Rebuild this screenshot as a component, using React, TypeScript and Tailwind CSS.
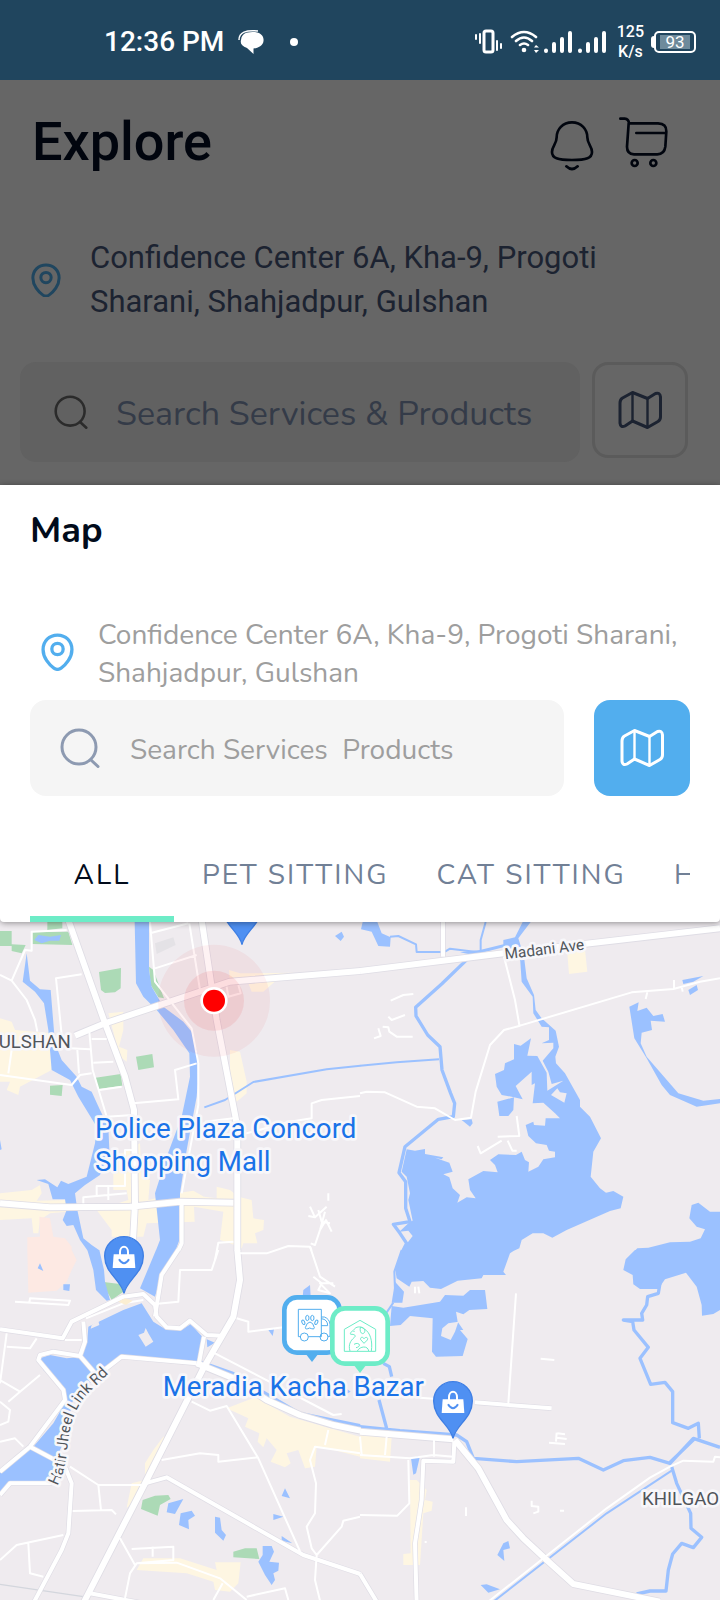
import React from "react";

/* Map drawing: four tiles, each 1080 units wide and 1020 units high. */
const tileTransforms = [
  "translate(0 0)",
  "translate(1080 0)",
  "translate(0 1020)",
  "translate(1080 1020)",
];

type TilePaths = [string, string, string, string];

const parks: TilePaths = [
  "M0 63H35V108H0ZM35 103L77 105L65 130L35 123ZM97 67L205 65L217 105L97 102ZM142 36H187V55L142 60ZM297 186L363 174L362 235L345 247L315 249L303 240ZM447 170L460 180L492 265L475 262L452 225ZM408 440L457 432L462 472L415 480ZM287 503L362 492L367 527L295 537ZM150 527L188 525L185 558L150 554Z",
  "",
  "M305 95L365 103L370 125L335 150ZM428 750L465 737L505 735L512 747L480 765L473 797L423 777ZM700 905L735 895L770 895L778 927L700 922Z",
  "",
];

const districts: TilePaths = [
  "M0 325L35 335L45 360L155 370V480L60 530L55 555L20 540L30 515H0ZM325 310L370 305V360L357 410L382 420L380 455L360 440ZM687 180L720 190L880 188L830 210L790 245H755L745 220L690 225ZM690 420L720 425L740 515V550L710 575L690 500ZM0 850L95 840L120 825L125 850L110 872L200 870V905L150 910L120 930L115 970H100L95 925L0 930ZM340 745L420 700L425 800L450 810L445 870L530 850L580 842L612 860L650 865V830L690 840L715 860L755 870L760 925L792 930L790 960L765 970L772 1000H730L725 1015L690 1000L660 990L670 905L582 890L584 935L440 940L430 980H335V960L290 900L385 870L380 840L340 840Z",
  "M622 130L675 120L682 185L627 192Z",
  "M680 475L770 440L790 455L870 500L990 535L1080 560V620L1000 600L950 590L945 650L915 655L895 600L860 610L872 640L855 652L812 635L830 600L800 565L790 592L773 575L778 550L735 530L745 505ZM490 560H515L400 760L380 773L395 700L435 690V640L460 600ZM430 925H540L650 960L645 937H722L715 1000L690 1025L645 1020L640 995L560 970L410 960Z",
  "M0 550L95 560L90 635L0 625ZM150 690H170L200 720L195 750L218 755L215 782L190 790L180 945H130V912L152 910Z",
];

const hospital: TilePaths = [
  "M82 982L120 980L118 920L150 925L160 980L195 985L215 1010V1020H82Z",
  "",
  "M82 0H215L230 30L215 60L200 95L170 122L85 128Z",
  "",
];

const water: TilePaths = [
  "M80 130L68 215L105 245L132 280L145 360L155 480L210 510L235 560L290 650L285 700L260 800L205 822L183 812L172 832L135 808L110 810L145 822L158 868H195L200 900L188 930L200 948L220 945L240 990L262 1021H298L275 1005L250 985L232 900L225 850L255 825L300 795L328 720L325 650L300 600L275 545L245 530L230 500L185 450L165 400L152 240L120 238L90 212ZM404 36H447V180L455 230L490 290L550 335L575 365L592 430L593 520L590 560L560 720L540 850V985L527 1021H468L480 990L465 850L500 740L545 620L570 500L568 430L520 360L470 300L430 260L408 220ZM103 90L115 75L150 80L183 75L178 92L150 92L125 100ZM1005 78L1025 65L1032 80L1022 93ZM0 690L5 718L0 720Z",
  "M8 36H52L65 70L92 82L90 110L55 108L35 65L3 58ZM300 127L360 120L430 103L430 90L465 82L488 36H512L475 85L492 140L500 205L522 255L527 300L545 325L587 362L597 410L586 440L588 460L615 490L660 570V590L690 620L723 685L700 725L692 800L720 835L738 848L760 843L790 860L782 895L750 903L620 960L577 983L550 970L518 970L485 990L478 1015L465 1021H125L158 978L145 962L118 965L150 935L158 932L145 870L150 850L140 800L125 785L140 718L165 722L195 717V732L250 742L245 748L225 743L268 758L278 785L250 793L268 802L278 835L300 855L292 878L320 862L347 865L330 840L325 808L370 783L413 787L405 765L390 750L415 733L468 735L485 725L495 750L507 757L505 785L535 770L550 748L585 742V725L567 722L560 705L528 700L505 678L497 645L520 635L522 645L555 647L557 625H600L585 610L550 578L518 580L525 520L515 525V485L467 528L488 568L455 560L425 555L410 530L405 492L432 480L435 460L462 448V402L482 407L513 385L502 437L532 438L560 488L562 542L610 512L575 522L565 485L548 452L580 415V398L545 400L567 390V352L545 350L520 310L518 260L485 215L480 140L430 112L340 135ZM412 575L462 562L460 600L445 618H418ZM305 630L335 628L338 640L330 650ZM808 290L836 277L832 303L860 293L880 318L908 312L915 335L872 332L876 360L845 368L842 400L860 440L955 550L1030 572L1080 567V580L1010 590L930 555L905 525L860 445L823 385ZM967 210L1030 198L1000 215L970 222ZM985 240L1010 225L1014 240L990 255ZM995 885L1015 878L1050 905H1080V1021H826L832 1015L865 1013L930 997L990 995L1022 985L1035 958L1010 950L988 925Z",
  "M262 0H298L312 60L315 95L330 150L320 152L288 120L280 60ZM468 0H530L485 70L465 140L420 115ZM265 230L370 180L425 160L460 215L500 240H545L572 222L608 262V300L590 335L370 318L300 360L270 400L235 425L215 460L200 560L180 600L160 690L60 700L20 710L0 735V670L100 590L160 520L200 450L195 420L130 360L120 325L150 315L200 325L245 320L262 270ZM620 268L645 278L622 292ZM805 240L822 238L818 258ZM910 120L930 105L932 140H908ZM600 330L700 365L780 415L900 485L1081 522V540L900 505L780 440L660 375ZM505 760L550 747L525 792L500 787ZM542 790L575 782L585 797L565 810L567 838L537 825ZM645 800L660 803L665 840L678 855L670 872L645 848ZM855 715L870 745L845 738ZM820 792L850 800L820 810ZM845 858L877 880L845 872ZM788 888H815L822 905L808 935L837 938L835 962L820 970L825 990L815 1005L795 975L775 935L788 915ZM120 40L130 63L113 55ZM190 103H210L208 123L190 120ZM1038 415L1052 425L1038 432Z",
  "M125 0H465L450 10L430 65L438 75H370L365 85L293 92L243 117L210 113L190 93L155 95L148 110L110 85L105 55ZM105 95L132 125L127 158H95ZM95 168L130 173L240 155L255 135L310 137L330 120H375L382 177L328 180L310 193L288 185L293 215L310 240H300L323 267L308 318L228 320L216 305L218 205L150 198L122 225L90 228ZM825 0H1080V180L1060 192L1026 197L1025 165L1010 110L978 68L915 88L895 117H840L820 103L818 75L790 60L797 28ZM430 880L445 873L450 895L430 900L433 933L412 915ZM153 625L180 618L168 670L160 674ZM362 1005L380 1003L420 1018L385 1028Z",
];

const islands: TilePaths = [
  "",
  "M573 555L592 535L600 547L620 550L613 578Z",
  "M415 255L432 248L437 234L445 250L460 275L437 290ZM275 225L295 212L298 225L272 236Z",
  "M265 220L295 215L285 245L272 270L243 258L247 235Z",
];

const streams: TilePaths = [
  "M613 592L675 570L760 516L980 478L1081 467",
  "M0 467L110 457L237 448M90 80L115 78L168 103L170 126H250M255 125L270 116L350 126M377 36L362 90V125",
  "",
  "M125 0L103 65L105 120M130 0L110 60M100 158L78 190M935 662L740 790L400 1055",
];

const canals: TilePaths = [
  "",
  "M330 140L245 222L167 292L168 318L203 375L240 410L246 480L272 550L284 580L280 620L235 628L135 710L117 788L137 815V895L150 935L100 943L120 970L140 1000L125 1030",
  "",
  "M70 340L88 350L95 380M57 450L80 535M900 100L895 130L863 140L860 165L845 190L848 210L790 210L818 215L822 240L865 292L840 325L872 403L915 397L938 425L938 518L985 535L1015 520L1018 565M935 650L950 700L992 790L993 835L1025 862L1000 893L965 880L938 912L925 960L918 1023H870L830 1032M0 530L120 542L290 555L320 575L340 625L470 635L655 625L730 660L790 632L870 622L930 640L1000 565L1080 592M925 642L1005 565",
];

const avenues: TilePaths = [
  "M205 30L315 340L375 500L402 600L405 880L395 1070M225 377L315 340L600 245L690 215L1081 183M605 30L650 330L712 650V1022M0 880L150 892L390 890L540 875L700 878",
  "M0 183L430 130L1080 55",
  "M712 0L720 90L700 200L610 355L435 700L250 1060M590 340L700 385L800 450L900 495L1000 525L1081 542",
  "M0 545L280 568M285 570L355 655L440 810L490 865L560 930L640 1002L900 1055",
];

const roads: TilePaths = [
  "M545 875V1000L535 1021",
  "M249 30V140",
  "M0 238L188 265L215 215L370 140L430 132L465 165L470 200L500 232L540 235L570 212L620 255L665 257M250 215L255 275L240 318L285 370M240 318L160 305L120 315L115 330L190 420L195 450L90 590L0 665M590 340L365 320L300 370M195 650L215 700L205 850L185 900L100 1060M90 590L165 630M0 735L30 700L150 700L170 690M612 260L595 350M535 -1L485 75L465 200M435 700L500 682L910 915L1081 972M270 1030L430 1060",
  "M283 575L280 635L190 632L185 750L165 880L170 1060M0 972L50 1055M345 457L575 475",
];

const lanes: TilePaths = [
  "M0 195L35 212L75 120L95 122V65L200 60M35 212L80 270L105 330L112 365M245 193L168 205L185 375M268 365L278 480L320 620M275 387H320M280 458L340 455M0 495L215 525L240 495L275 490M210 415L270 418M232 420L237 490M35 420L25 490M298 540L365 530M400 580L535 568L525 480L590 460M450 70L565 40M465 175L590 135M450 36L465 215L575 355L595 460V585L545 850M568 40L600 240M250 880V862L380 850M290 855V828H375V720H400M325 828V870M1080 558L965 570L935 580V625L870 635L740 670L715 675M712 1030L800 1030L865 1008L930 1010L935 1022M645 1050L655 998L700 995M320 620L400 615M615 635L700 625M930 890L945 922L925 918M945 922L980 890M955 900L965 935L990 940M975 905L960 960L945 1005L932 1000M960 960L978 930L995 965M985 850V872M680 230L685 260L722 250L715 225",
  "M432 140L465 270L478 345M0 550L20 545L75 547L170 590L225 595L285 630L333 623L347 545L390 405L432 360L480 347L815 247L940 237L1020 215L1080 205M92 272L130 255L160 252M85 320L95 330L135 315M55 355L62 378L42 385M68 350L85 352L88 365L110 380H158M470 618L478 678L413 680M353 708L362 730L425 692M443 692L457 722H470M942 210V235M857 267L862 247M965 230L968 245",
  "M465 162L535 155L540 60L635 60L655 0M710 205L745 215V245L850 232M575 455L630 482L680 468L775 625L905 915M485 630L600 610L655 615V635L775 622M210 650L295 705H430M295 705L303 780M218 783L335 780L348 793M360 865L405 945M395 897L520 890V930L410 940M458 890V920M375 1045L390 970L410 940L530 938L660 985L740 1050M740 1040L855 1015L865 1050M640 1050L668 1000M0 930L50 885L190 855M85 880L90 970L130 980M20 250L0 400M20 290L90 295L110 265M0 390L60 425L120 375M25 455L60 425M0 455L30 480L25 515L0 525M0 575L45 565L70 590M195 270H245M45 155L205 165L210 152L90 145L88 158M930 -10L960 80L1005 110M940 80L965 100L955 120L990 130L960 100L1000 100M258 205L370 160L430 150M645 310L1000 495L1025 492M985 540L975 585M1080 610L945 590L930 630L948 700L945 790L920 830L935 895L950 915L945 990L962 1060M950 915L1025 830L1030 812L1080 800",
  "M180 443L220 446M468 130L445 460M0 615L150 625L220 615L280 620M145 630L148 760L112 797L0 795M222 570V620M80 560L75 615M0 560L5 615M930 650L870 683L740 775L385 1055M930 650L970 632L1060 635L1065 620L1080 622M542 326L583 330M590 548L588 575M592 550L615 553M590 563L620 567M567 578L615 582M515 752V768L535 770V785L520 790M318 772V798M600 782H612M194 876H200M165 110V130M175 110L178 130",
];

function Fill({ paths, color }: { paths: TilePaths; color: string }) {
  return (
    <g fill={color}>
      {paths.map((d, i) => (d ? <path key={i} d={d} transform={tileTransforms[i]} /> : null))}
    </g>
  );
}

function Line({ paths, color, width }: { paths: TilePaths; color: string; width: number }) {
  return (
    <g fill="none" stroke={color} strokeWidth={width} strokeLinejoin="round">
      {paths.map((d, i) => (d ? <path key={i} d={d} transform={tileTransforms[i]} /> : null))}
    </g>
  );
}

function ShopPin({ x, y }: { x: number; y: number }) {
  return (
    <g transform={`translate(${x} ${y})`}>
      <path
        d="M0 112C-8 72-58 52-58 0A58 58 0 0 1 58 0C58 52 8 72 0 112Z"
        fill="#4f90f2"
        stroke="#3f7fe4"
        strokeWidth="4"
      />
      <path d="M-31-5H31L34 36H-34Z" fill="#fff" />
      <path d="M-12-3V-12A12 16 0 0 1 12-12V-3" fill="none" stroke="#fff" strokeWidth="6" />
      <path d="M-15 10Q0 34 15 10" fill="none" stroke="#4f90f2" strokeWidth="6" />
    </g>
  );
}

function CityMap() {
  return (
    <svg viewBox="0 36 2160 2034" className="block h-auto w-full" role="img" aria-label="Map of Gulshan">
      <rect y="36" width="2160" height="2034" fill="#efebef" />
      <Fill paths={districts} color="#fef6e2" />
      <Fill paths={hospital} color="#fde9e3" />
      <Fill paths={parks} color="#acdab6" />
      <path d="M465 100L520 82L527 105L470 132Z" fill="#e4e2e6" />
      <Fill paths={water} color="#9bc1ff" />
      <Fill paths={islands} color="#efebef" />
      <Line paths={streams} color="#9bc1ff" width={6} />
      <Line paths={canals} color="#9bc1ff" width={10} />
      <path d="M0 2023L250 2060" stroke="#d3d6dd" strokeWidth="4" />
      <Line paths={roads} color="#dfdde5" width={16} />
      <Line paths={avenues} color="#dfdde5" width={23} />
      <Line paths={lanes} color="#ffffff" width={6} />
      <Line paths={roads} color="#ffffff" width={12} />
      <Line paths={avenues} color="#ffffff" width={18} />
      <path d="M355 1175L375 1165L398 1172L378 1185Z" fill="#fbeed2" />

      <g fill="#e9272f">
        <circle cx="642" cy="272" r="168" fillOpacity=".06" />
        <circle cx="642" cy="272" r="90" fillOpacity=".1" />
      </g>
      <circle cx="642" cy="272" r="41" fill="#fff" />
      <circle cx="642" cy="272" r="33" fill="#f00" />

      <ShopPin x={726} y={-8} />
      <ShopPin x={372} y={1038} />
      <ShopPin x={1359} y={1473} />

      <g
        fontFamily="Roboto, sans-serif"
        stroke="#f8f7fa"
        strokeWidth="16"
        strokeLinejoin="round"
        style={{ paintOrder: "stroke" }}
      >
        <g fill="#1a73e8" fontSize="83">
          <text x="285" y="683">Police Plaza Concord</text>
          <text x="285" y="782">Shopping Mall</text>
          <text x="488" y="1459">Meradia Kacha Bazar</text>
        </g>
        <g fill="#50555b" fontSize="56">
          <text x="-4" y="415">ULSHAN</text>
          <text x="1926" y="1786">KHILGAO</text>
        </g>
        <g fill="#50555b" fontSize="46">
          <text x="1516" y="148" transform="rotate(-7 1516 148)">Madani Ave</text>
          <path
            id="link-road"
            d="M172 1728C215 1650 190 1570 235 1490C260 1445 290 1430 345 1370"
            fill="none"
            stroke="none"
          />
          <text>
            <textPath href="#link-road">Hatir Jheel Link Rd</textPath>
          </text>
        </g>
      </g>
    </svg>
  );
}

function VanMarker() {
  return (
    <svg viewBox="0 0 180 201" className="w-full" fill="none">
      <path d="M72 178H108L90 201Z" fill="#52aeee" />
      <rect x="7" y="7" width="166" height="166" rx="38" fill="#fff" stroke="#52aeee" strokeWidth="14" />
      <g stroke="#52aeee" strokeWidth="3">
        <path d="M55 125H49V43H118V125H79M118 66H127Q143 72 144 88V124H138M118 92H137Q137 73 118 71" />
        <circle cx="67" cy="126" r="12" />
        <circle cx="126" cy="126" r="12" />
        <ellipse cx="64" cy="82" rx="4" ry="7" transform="rotate(-25 64 82)" />
        <ellipse cx="76" cy="69" rx="5" ry="8" />
        <ellipse cx="91" cy="69" rx="5" ry="8" />
        <ellipse cx="103" cy="82" rx="4" ry="7" transform="rotate(25 103 82)" />
        <path d="M70 98Q74 82 84 81Q93 82 97 98Q97 105 83 99Q70 105 70 98Z" />
      </g>
    </svg>
  );
}

function KennelMarker() {
  return (
    <svg viewBox="0 0 180 201" className="w-full" fill="none">
      <path d="M72 178H108L90 201Z" fill="#6decc7" />
      <rect x="7" y="7" width="166" height="166" rx="38" fill="#fff" stroke="#6decc7" strokeWidth="14" />
      <g stroke="#6decc7" strokeWidth="3" strokeLinejoin="round">
        <path d="M43 136V70L90 43L137 70V136Z" />
        <path d="M60 135C54 116 62 104 72 95C82 88 70 84 62 85C58 78 70 76 74 68C82 60 96 62 102 68C122 80 128 106 124 135" />
        <path d="M91 64C88 78 96 88 103 80C108 72 100 64 91 64M72 115C88 106 96 122 78 125M82 135C90 120 114 118 116 135" />
        <path d="M102 112L92 101C90 92 99 92 102 98C106 92 116 93 112 102Z" />
        <path d="M70 76H74" />
      </g>
    </svg>
  );
}

function MapIcon({ className }: { className: string }) {
  return (
    <svg viewBox="0 0 44 40" className={className} fill="none" stroke="currentColor" strokeWidth="3" strokeLinejoin="round">
      <path d="M14.500 2.500L4.500 8Q2 9.500 2 13V33Q2.500 38 7 36L14.500 31L29.500 37.500L40 31.500Q42.500 30 42.500 27V7Q42 2 37.500 3.500L29.500 8.500Z" />
      <path d="M14.500 2.500V31M29.500 8.500V37.500" strokeWidth="2.400" />
    </svg>
  );
}

function PinIcon({ className }: { className: string }) {
  return (
    <svg viewBox="0 0 32 37" className={className} fill="none" stroke="currentColor" strokeWidth="3.200">
      <path d="M16 2C8 2 2 8 2 16C2 24 8 31 12.500 34Q16 36.500 19.500 34C24 31 30 24 30 16C30 8 24 2 16 2Z" />
      <circle cx="16" cy="15.500" r="5.500" />
    </svg>
  );
}

function SearchIcon({ className }: { className: string }) {
  return (
    <svg viewBox="0 0 40 40" className={className} fill="none" stroke="currentColor" strokeWidth="3" strokeLinecap="round">
      <circle cx="19" cy="19" r="17" />
      <path d="M31 32L38 38.500" />
    </svg>
  );
}

function BellIcon() {
  return (
    <svg viewBox="0 0 132 156" className="w-11" fill="none" stroke="currentColor" strokeWidth="8" strokeLinecap="round">
      <path d="M66 7C38 7 20 28 20 52C20 72 6 78 6 96C6 114 22 120 66 120C110 120 126 114 126 96C126 78 112 72 112 52C112 28 94 7 66 7Z" />
      <path d="M49 139Q66 155 83 139" />
    </svg>
  );
}

function CartIcon() {
  return (
    <svg viewBox="0 0 156 156" className="w-[52px]" fill="none" stroke="currentColor" strokeWidth="8" strokeLinecap="round">
      <path d="M7 8H20Q32 9 33 22H120Q146 23 145 46L142 92Q139 115 118 115H48Q27 114 27 92L32 22M55 51H142" />
      <circle cx="50" cy="141" r="9" />
      <circle cx="106" cy="141" r="9" />
    </svg>
  );
}

function StatusBar() {
  return (
    <div className="flex h-20 items-center bg-[#20455e] pt-1 pr-6 pl-[104px] font-[Roboto,sans-serif] text-white">
      <span className="text-[28px] leading-8 font-medium">12:36 PM</span>
      <svg viewBox="0 0 26 24" className="ml-3.5 w-[26px]" fill="currentColor">
        <path d="M3 10C4 2 10 2 17 2C24 3 26 7 25.500 11C25 16 20 18 15.500 18.500V24L9 18C4 16 2 14 3 10Z" />
        <path d="M1 10C1 2 8 0 20 1" fill="none" stroke="currentColor" strokeWidth="1.500" />
      </svg>
      <span className="ml-[26px] size-2 rounded-full bg-white" />
      <svg viewBox="0 0 132 26" className="ml-auto w-[132px]" fill="none" stroke="currentColor" strokeLinecap="round">
        <g strokeWidth="2">
          <path d="M1 6V10M5 5V14M22 12V21M26 15V19" />
          <rect x="9" y="2" width="9" height="21" rx="2" strokeWidth="3" />
        </g>
        <g strokeWidth="2.600">
          <path d="M37 8Q49 -2 61 8M41 12Q49 5 57 12M45 16Q49 13 53 16" />
        </g>
        <circle cx="49" cy="21" r="2.300" fill="currentColor" stroke="none" />
        <path d="M61 16L64 18.500H59ZM61 24L59 21H64Z" fill="currentColor" stroke="none" />
        <path d="M71 21.500V22M79 15V22M87 10V22M95 4V22M105 21.500V22M113 15V22M121 10V22M129 4V22" strokeWidth="4" />
      </svg>
      <span className="ml-2.5 text-center text-[16px] leading-5 font-medium">
        125
        <br />
        K/s
      </span>
      <span className="ml-[7px] h-3 w-[3px] rounded-l-sm bg-white" />
      <span className="flex h-[22px] w-[42px] rounded-[5px] border-2 border-white px-1 py-0.5">
        <span className="flex flex-1 items-center justify-center bg-[#6e8a9b] text-[17px] leading-4">93</span>
      </span>
    </div>
  );
}

const tabs = ["ALL", "PET SITTING", "CAT SITTING", "HOTEL"];

export default function App() {
  return (
    <div className="min-h-screen bg-[#efebef]">
      <StatusBar />

      <header className="bg-[#666666] px-5 pb-[23px] text-[#1c2331]">
        <div className="flex items-start pt-6 pr-[30px] pl-3 font-[Roboto,sans-serif] text-[#01050e]">
          <h1 className="pt-1.5 text-[54px] leading-[64px] font-medium">Explore</h1>
          <button type="button" aria-label="Notifications" className="mt-4 ml-auto">
            <BellIcon />
          </button>
          <button type="button" aria-label="Cart" className="mt-3 ml-6">
            <CartIcon />
          </button>
        </div>
        <div className="mt-[62px] flex items-center pl-[11px]">
          <PinIcon className="w-[30px] shrink-0 text-[#20465f]" />
          <p className="ml-[29px] max-w-[540px] font-[Roboto,sans-serif] text-[31px] leading-[44px]">
            Confidence Center 6A, Kha-9, Progoti Sharani, Shahjadpur, Gulshan
          </p>
        </div>
        <div className="mt-[38px] flex items-start gap-3 pr-3">
          <label className="flex h-[100px] min-w-0 flex-1 items-center rounded-2xl bg-[#616161] pl-[34px]">
            <SearchIcon className="w-[34px] shrink-0 text-[#2b2b2b]" />
            <input
              type="search"
              aria-label="Search services and products"
              placeholder="Search Services &amp; Products"
              className="ml-7 min-w-0 flex-1 bg-transparent pt-1 font-[Nunito,Lato,sans-serif] text-[34px] outline-none placeholder:text-[#343b48]"
            />
          </label>
          <button
            type="button"
            aria-label="Open map"
            className="flex size-24 items-center justify-center rounded-2xl border-[3px] border-[#5b5b5b]"
          >
            <MapIcon className="w-11" />
          </button>
        </div>
      </header>

      <section
        role="dialog"
        aria-labelledby="sheet-title"
        className="relative z-10 rounded-b-[4px] bg-white px-[30px] pt-6 font-[Nunito,Lato,sans-serif] shadow-[0_1px_6px_rgba(0,0,0,0.4)]"
      >
        <h2 id="sheet-title" className="text-[36px] leading-[44px] font-bold text-[#010b1b]">
          Map
        </h2>
        <div className="mt-[63px] flex items-start pl-[11px]">
          <PinIcon className="mt-[17px] w-[33px] shrink-0 text-[#52aeee]" />
          <p className="ml-6 text-[28px] leading-[38px] text-[#9e9e9e]">
            Confidence Center 6A, Kha-9, Progoti Sharani, Shahjadpur, Gulshan
          </p>
        </div>
        <div className="mt-2 flex gap-[30px]">
          <label className="flex h-24 min-w-0 flex-1 items-center rounded-2xl bg-[#f5f5f5] pl-[30px]">
            <SearchIcon className="w-10 shrink-0 text-[#8d9ab1]" />
            <input
              type="search"
              aria-label="Search the map"
              placeholder={"Search Services\u00a0 Products"}
              className="ml-[30px] min-w-0 flex-1 bg-transparent pt-1 text-[28px] outline-none placeholder:text-[#9e9e9e]"
            />
          </label>
          <button
            type="button"
            aria-label="Show map"
            className="flex size-24 items-center justify-center rounded-2xl bg-[#52aeee] text-white"
          >
            <MapIcon className="w-11" />
          </button>
        </div>
        <div role="tablist" className="mt-[30px] flex overflow-hidden">
          {tabs.map((tab, i) => (
            <button
              key={tab}
              type="button"
              role="tab"
              aria-selected={i === 0}
              className={
                i === 0
                  ? "mr-1 h-24 min-w-[144px] shrink-0 border-b-[6px] border-[#6decc7] px-6 pt-2 text-[28px] tracking-[2px] text-[#010b1b]"
                  : "h-24 shrink-0 border-b-[6px] border-transparent px-6 pt-2 text-[28px] tracking-[2px] text-[#718096]"
              }
            >
              {tab}
            </button>
          ))}
        </div>
      </section>

      <main className="relative overflow-hidden">
        <CityMap />
        <button type="button" aria-label="Pet transport" className="absolute top-[55%] left-[39.2%] w-[60px]">
          <VanMarker />
        </button>
        <button type="button" aria-label="Pet boarding" className="absolute top-[56.6%] left-[45.8%] w-[60px]">
          <KennelMarker />
        </button>
      </main>
    </div>
  );
}
